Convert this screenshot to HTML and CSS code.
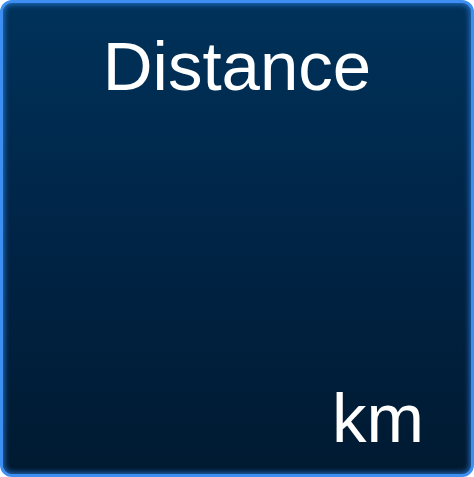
FILE: index.html
```html
<!DOCTYPE html>
<html>
<head>
<meta charset="utf-8">
<link rel="stylesheet" href="styles.css">
</head>
<body>
<div class="tile">
  <div class="title">Distance</div>
  <div class="value"></div>
  <div class="unit">km</div>
</div>
</body>
</html>
```
FILE: styles.css
```css
html, body {
  margin: 0;
  padding: 0;
  background: #ffffff;
}
.tile {
  box-sizing: border-box;
  width: 474px;
  height: 477px;
  border: 3px solid #3d90f2;
  border-radius: 12px;
  background: linear-gradient(to bottom, #00325a 0%, #002446 50%, #001a31 100%);
  box-shadow: inset 0 0 5px 2px rgba(50, 140, 245, 0.6);
  display: flex;
  flex-direction: column;
  font-family: "Liberation Sans", Arial, sans-serif;
  color: #ffffff;
}
.title {
  font-size: 69px;
  line-height: 1;
  text-align: center;
  padding-top: 29px;
}
.value {
  flex: 1;
}
.unit {
  font-size: 69px;
  line-height: 1;
  text-align: right;
  padding-right: 47px;
  padding-bottom: 21px;
}
```
